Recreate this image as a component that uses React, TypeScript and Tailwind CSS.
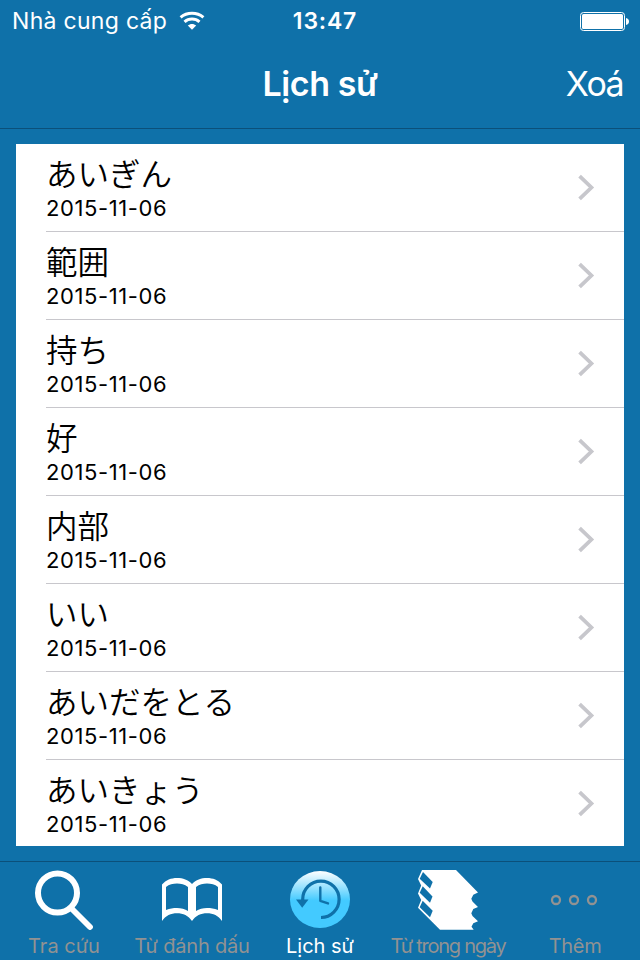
import React from 'react';

interface HistoryEntry {
  word: string;
  date: string;
}

interface TabItem {
  label: string;
  icon: React.ReactNode;
  active?: boolean;
  labelClass: string;
}

const entries: HistoryEntry[] = [
  { word: 'あいぎん', date: '2015-11-06' },
  { word: '範囲', date: '2015-11-06' },
  { word: '持ち', date: '2015-11-06' },
  { word: '好', date: '2015-11-06' },
  { word: '内部', date: '2015-11-06' },
  { word: 'いい', date: '2015-11-06' },
  { word: 'あいだをとる', date: '2015-11-06' },
  { word: 'あいきょう', date: '2015-11-06' },
];

const WifiIcon = () => (
  <svg width="26" height="20" viewBox="0 0 26 20" fill="none" stroke="white" strokeWidth="3">
    <path d="M1.6 6.4C8 .9 18 .9 24.4 6.4" />
    <path d="M5.5 10.8C9.8 7 16.2 7 20.5 10.8" />
    <path d="M8.8 14.6C11.2 12.3 14.8 12.3 17.2 14.6L13 18.8Z" fill="white" stroke="none" />
  </svg>
);

const BatteryIcon = () => (
  <svg width="49" height="19" viewBox="0 0 49 19">
    <rect x="0.5" y="0.5" width="44" height="18" rx="3" fill="none" stroke="white" />
    <rect x="2" y="2" width="41" height="15" rx="1.5" fill="white" />
    <path d="M46 6C48 6.3 49 7.6 49 9.5S48 12.7 46 13Z" fill="white" />
  </svg>
);

const ChevronIcon = () => (
  <svg width="18" height="28" viewBox="0 0 18 28" fill="none" stroke="#c7c7cc" strokeWidth="3.8">
    <path d="M1.6 2.2L13.4 13.5L1.6 24.8" />
  </svg>
);

const SearchIcon = () => (
  <svg width="60" height="60" viewBox="0 0 60 60" fill="none" stroke="white">
    <circle cx="23.5" cy="23" r="19.5" strokeWidth="6" />
    <path d="M38 39L56 57" strokeWidth="5.8" strokeLinecap="round" />
  </svg>
);

const BookIcon = () => (
  <svg width="60" height="60" viewBox="0 0 60 60" fill="white">
    <path
      fillRule="evenodd"
      d="M0 14.5C4 10 9 8 15 8S26 9.8 30 14C34 9.8 39 8 45 8S56 10 60 14.5V51C56.5 45.5 51 43.2 45 43.2S33.5 45.5 30 51C26.5 45.5 21 43.2 15 43.2S3.5 45.5 0 51ZM4 17V40C8 38.4 11 38 15 38S23 39 26 41V17C22.5 14.5 19 13.6 15 13.6S7 14.6 4 17ZM34 17V41C37 39 41 38 45 38S52 38.4 56 40V17C53 14.6 49 13.6 45 13.6S37.5 14.5 34 17Z"
    />
  </svg>
);

const HistoryIcon = () => (
  <svg width="60" height="60" viewBox="0 0 60 60" fill="none">
    <defs>
      <linearGradient id="historyFill" x1="0" y1="0" x2="0" y2="1">
        <stop offset="0" stopColor="#ffffff" />
        <stop offset="0.52" stopColor="#43caff" />
        <stop offset="1" stopColor="#43caff" />
      </linearGradient>
    </defs>
    <ellipse cx="30" cy="29.5" rx="30" ry="28.5" fill="url(#historyFill)" />
    <path d="M12.7 30V29.3A18.2 18.2 0 1 1 31 47.5" stroke="#0f71a9" strokeWidth="3.2" />
    <path d="M6 29.5H18.5L12.2 37.8Z" fill="#0f71a9" />
    <path
      d="M30.3 17.5V30.8L38 33.4"
      stroke="#0f71a9"
      strokeWidth="2.4"
      strokeLinejoin="round"
      strokeLinecap="round"
    />
  </svg>
);

const PagesIcon = () => (
  <svg width="60" height="60" viewBox="0 0 60 60">
    <path
      d="M4 0H38L60 22.5L55.3 24.7L53.3 28.7L54.5 31.5L60 37L55.3 39L53.3 43.3L54.5 46L60 51.3L55.3 53.3L53.5 56.7L55.7 59.8H22L0 37.8L3.2 30L0 23.5L3.2 15.5L0 9Z"
      fill="white"
    />
    <g fill="#0f71a9">
      <path d="M5 2L14.7 12L12 18.5L1.7 8.8Z" />
      <path d="M4.7 16.3L14.5 26.5L12 32.8L1.7 22.7Z" />
      <path d="M4.7 30.7L14.7 40.7L12 47.2L1.7 37.2Z" />
    </g>
  </svg>
);

const MoreIcon = () => (
  <svg width="60" height="60" viewBox="0 0 60 60" fill="none" stroke="#929292" strokeWidth="2.3">
    <circle cx="10" cy="30" r="4" />
    <circle cx="28" cy="30" r="4" />
    <circle cx="46" cy="30" r="4" />
  </svg>
);

const tabs: TabItem[] = [
  { label: 'Tra cứu', icon: <SearchIcon />, labelClass: '' },
  { label: 'Từ đánh dấu', icon: <BookIcon />, labelClass: 'tracking-[-0.2px]' },
  { label: 'Lịch sử', icon: <HistoryIcon />, active: true, labelClass: '' },
  { label: 'Từ trong ngày', icon: <PagesIcon />, labelClass: 'tracking-[-1.25px]' },
  { label: 'Thêm', icon: <MoreIcon />, labelClass: 'tracking-[-0.3px] pr-[2px]' },
];

const StatusBar = () => (
  <div className="grid h-10 grid-cols-3 items-center pl-3 pr-[11px] pt-[2px] text-[23px] leading-none">
    <div className="flex items-center gap-3 whitespace-nowrap">
      <span className="tracking-[0.3px]">Nhà cung cấp</span>
      <WifiIcon />
    </div>
    <span className="pl-[9px] text-center font-semibold tracking-[0.8px]">13:47</span>
    <div className="flex justify-end">
      <BatteryIcon />
    </div>
  </div>
);

const NavBar = () => (
  <div className="grid h-[89px] grid-cols-3 items-center border-b border-[#0b507a] px-[17px] text-[34px] leading-none">
    <h1 className="col-start-2 text-center font-semibold tracking-[-0.4px]">Lịch sử</h1>
    <button className="text-right tracking-[-1.6px]">Xoá</button>
  </div>
);

const HistoryRow: React.FC<{ entry: HistoryEntry }> = ({ entry }) => (
  <li className="flex h-[88px] shrink-0 pl-[30px]">
    <div className="flex flex-1 items-center justify-between border-b border-[#c8c7cc] pr-7">
      <div className="self-start pt-1.5 text-black">
        <p className="h-[45px] font-['Noto_Sans_CJK_JP',sans-serif] text-[31.5px] font-[350] leading-[45px]">
          {entry.word}
        </p>
        <p className="h-[27px] text-[22px] leading-[27px] tracking-[0.6px]">{entry.date}</p>
      </div>
      <ChevronIcon />
    </div>
  </li>
);

const TabBar = () => (
  <nav className="grid h-[99px] grid-cols-5 border-t border-[#0b507a] pt-2">
    {tabs.map((tab) => (
      <button key={tab.label} className="flex flex-col items-center">
        {tab.icon}
        <span
          className={`whitespace-nowrap text-[20px] leading-8 ${tab.active ? 'text-white' : 'text-[#929292]'} ${tab.labelClass}`}
        >
          {tab.label}
        </span>
      </button>
    ))}
  </nav>
);

export default function App() {
  return (
    <div className="flex h-[960px] w-[640px] flex-col overflow-hidden bg-[#0f71a9] font-['Inter',sans-serif] text-white">
      <StatusBar />
      <NavBar />
      <main className="min-h-0 flex-1 px-4 pb-[15px] pt-[15px]">
        <ul className="flex h-full flex-col overflow-hidden bg-white">
          {entries.map((entry) => (
            <HistoryRow key={entry.word} entry={entry} />
          ))}
        </ul>
      </main>
      <TabBar />
    </div>
  );
}
